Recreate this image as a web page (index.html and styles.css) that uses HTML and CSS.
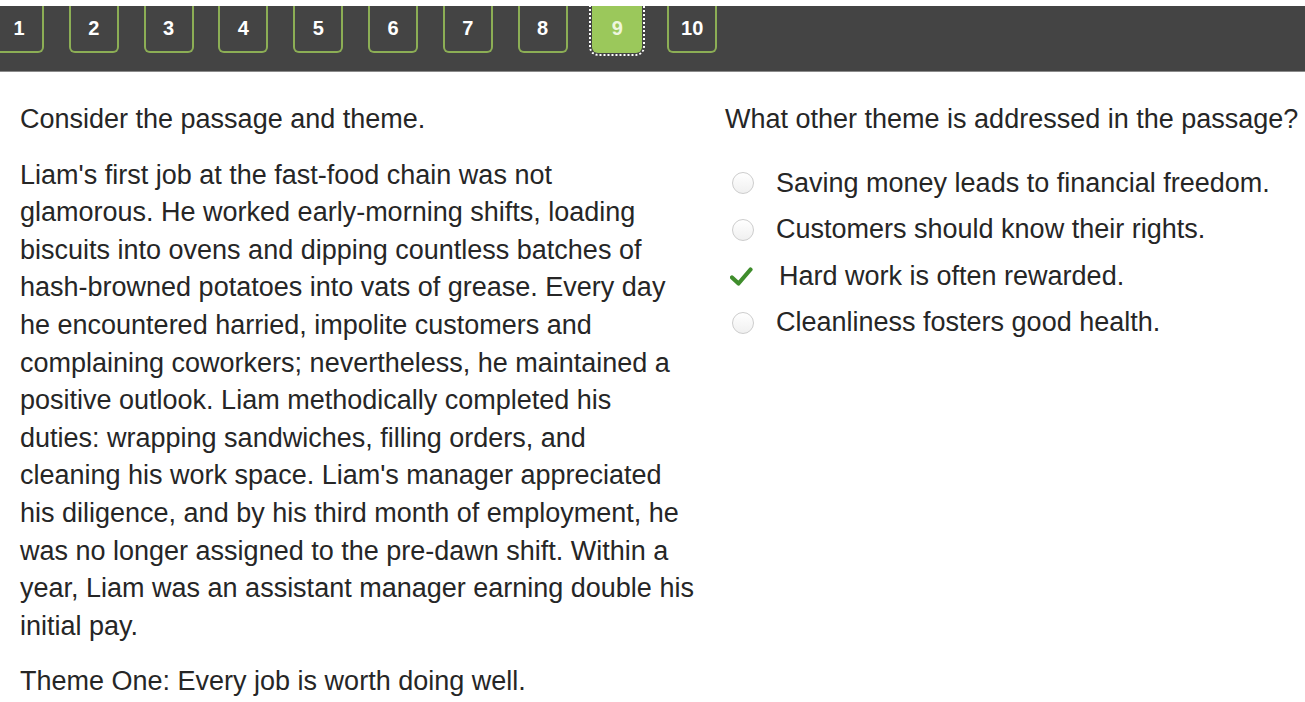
FILE: index.html
```html
<!DOCTYPE html>
<html lang="en">
<head>
    <meta charset="UTF-8">
    <title>Passage Themes</title>
    <link rel="stylesheet" href="styles.css">
</head>
<body>
    <div class="topbar">
        <div class="pager">
            <span class="page">1</span>
            <span class="page">2</span>
            <span class="page">3</span>
            <span class="page">4</span>
            <span class="page">5</span>
            <span class="page">6</span>
            <span class="page">7</span>
            <span class="page">8</span>
            <span class="page active">9</span>
            <span class="page">10</span>
        </div>
    </div>
    <div class="content">
        <div class="passage-col">
            <p>Consider the passage and theme.</p>
            <p>Liam's first job at the fast-food chain was not<br>
            glamorous. He worked early-morning shifts, loading<br>
            biscuits into ovens and dipping countless batches of<br>
            hash-browned potatoes into vats of grease. Every day<br>
            he encountered harried, impolite customers and<br>
            complaining coworkers; nevertheless, he maintained a<br>
            positive outlook. Liam methodically completed his<br>
            duties: wrapping sandwiches, filling orders, and<br>
            cleaning his work space. Liam's manager appreciated<br>
            his diligence, and by his third month of employment, he<br>
            was no longer assigned to the pre-dawn shift. Within a<br>
            year, Liam was an assistant manager earning double his<br>
            initial pay.</p>
            <p>Theme One: Every job is worth doing well.</p>
        </div>
        <div class="question-col">
            <p class="question">What other theme is addressed in the passage?</p>
            <ul class="options">
                <li class="option"><span class="radio"></span>Saving money leads to financial freedom.</li>
                <li class="option"><span class="radio"></span>Customers should know their rights.</li>
                <li class="option correct">
                    <svg class="check" width="23" height="21" viewBox="0 0 23 21">
                        <path d="M2 11.5 L8.5 17.5 L20.5 3.5" fill="none" stroke="#3f8d2c" stroke-width="4.2" stroke-linecap="round" stroke-linejoin="round"/>
                    </svg>Hard work is often rewarded.</li>
                <li class="option"><span class="radio"></span>Cleanliness fosters good health.</li>
            </ul>
        </div>
    </div>
</body>
</html>
```

FILE: styles.css
```css
body {
    margin: 0;
    font-family: 'Liberation Sans', Arial, sans-serif;
    color: #262626;
    background: #fff;
}

.topbar {
    margin-top: 6px;
    height: 65px;
    background: #444;
    border-bottom: 1px solid #8a8a8a;
    overflow: hidden;
}

.pager {
    display: flex;
    gap: 24.8px;
    margin-left: -6px;
}

.page {
    box-sizing: border-box;
    width: 50px;
    height: 47px;
    display: flex;
    justify-content: center;
    align-items: center;
    border: 2px solid #8cae55;
    border-top: none;
    border-radius: 0 0 6px 6px;
    color: #fff;
    font-size: 20px;
    font-weight: bold;
}

.page.active {
    background: #9bc85b;
    border-color: #9bc85b;
    color: #eef6de;
    outline: 2px dotted #fff;
    outline-offset: 1px;
}

.content {
    display: flex;
    gap: 24px;
    padding: 29px 0 0 20px;
    font-size: 27px;
    line-height: 37.6px;
}

.content p {
    margin: 0 0 18px;
}

.passage-col {
    width: 681px;
    flex-shrink: 0;
    white-space: nowrap;
}

.question-col {
    flex: 1;
    white-space: nowrap;
}

.content .question {
    margin-bottom: 26px;
}

.options {
    list-style: none;
    margin: 0;
    padding: 0;
}

.option {
    display: flex;
    align-items: center;
    padding-left: 7px;
    margin-bottom: 9px;
}

.radio {
    box-sizing: border-box;
    width: 22px;
    height: 22px;
    margin-right: 22px;
    border: 1px solid #cdcdcd;
    border-radius: 50%;
    background: linear-gradient(#fff, #f0f0f0);
}

.check {
    margin-left: -2px;
    margin-right: 26px;
}
```
